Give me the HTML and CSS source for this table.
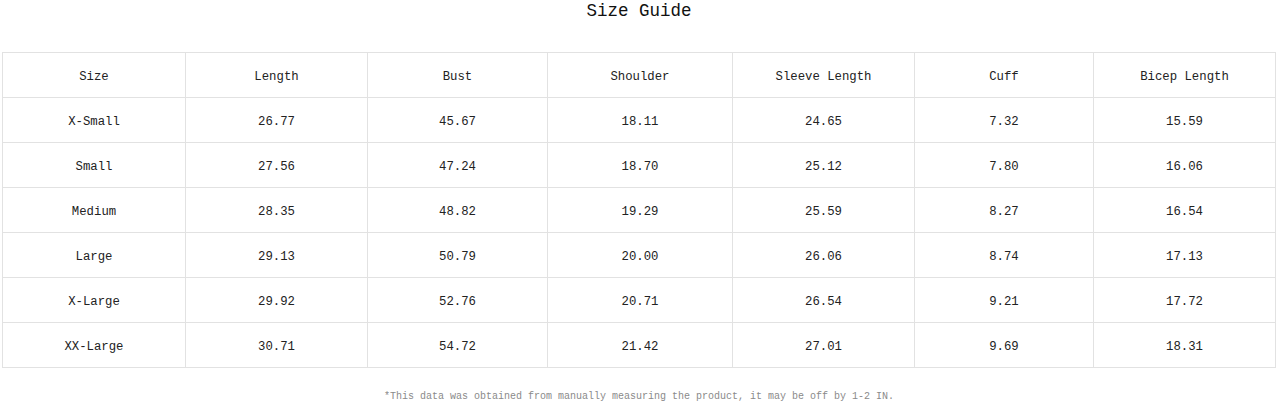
FILE: index.html
```html
<!DOCTYPE html>
<html lang="en">
<head>
<meta charset="utf-8">
<title>Size Guide</title>
<link rel="stylesheet" href="styles.css">
</head>
<body>
<div class="guide">
  <h2 class="guide-title">Size Guide</h2>
  <table class="size-table">
    <colgroup>
      <col class="c1"><col class="c2"><col class="c3"><col class="c4"><col class="c5"><col class="c6"><col class="c7">
    </colgroup>
    <thead>
      <tr><th>Size</th><th>Length</th><th>Bust</th><th>Shoulder</th><th>Sleeve Length</th><th>Cuff</th><th>Bicep Length</th></tr>
    </thead>
    <tbody>
      <tr><td>X-Small</td><td>26.77</td><td>45.67</td><td>18.11</td><td>24.65</td><td>7.32</td><td>15.59</td></tr>
      <tr><td>Small</td><td>27.56</td><td>47.24</td><td>18.70</td><td>25.12</td><td>7.80</td><td>16.06</td></tr>
      <tr><td>Medium</td><td>28.35</td><td>48.82</td><td>19.29</td><td>25.59</td><td>8.27</td><td>16.54</td></tr>
      <tr><td>Large</td><td>29.13</td><td>50.79</td><td>20.00</td><td>26.06</td><td>8.74</td><td>17.13</td></tr>
      <tr><td>X-Large</td><td>29.92</td><td>52.76</td><td>20.71</td><td>26.54</td><td>9.21</td><td>17.72</td></tr>
      <tr><td>XX-Large</td><td>30.71</td><td>54.72</td><td>21.42</td><td>27.01</td><td>9.69</td><td>18.31</td></tr>
    </tbody>
  </table>
  <p class="guide-note">*This data was obtained from manually measuring the product, it may be off by 1-2 IN.</p>
</div>
</body>
</html>
```

FILE: styles.css
```css
html, body {
  margin: 0;
  padding: 0;
  background: #ffffff;
}
body {
  font-family: "Liberation Mono", "DejaVu Sans Mono", monospace;
  color: #222222;
}
.guide {
  width: 1278px;
}
.guide-title {
  margin: 0 0 30px 0;
  font-size: 17.5px;
  line-height: 22px;
  font-weight: normal;
  text-align: center;
  color: #111111;
}
.size-table {
  margin-left: 2px;
  width: 1273px;
  table-layout: fixed;
  border-collapse: collapse;
  border: 1px solid #e2e2e2;
}
.c1 { width: 183px; }
.c2 { width: 182px; }
.c3 { width: 180px; }
.c4 { width: 185px; }
.c5 { width: 182px; }
.c6 { width: 179px; }
.c7 { width: 182px; }
.size-table th,
.size-table td {
  border: 1px solid #e2e2e2;
  height: 41px;
  padding: 3px 0 0 0;
  text-align: center;
  vertical-align: middle;
  font-size: 12.3px;
  font-weight: normal;
  color: #222222;
}
.guide-note {
  margin: 23px 0 0 0;
  font-size: 10px;
  line-height: 12px;
  text-align: center;
  color: #8a8a8a;
}
```
